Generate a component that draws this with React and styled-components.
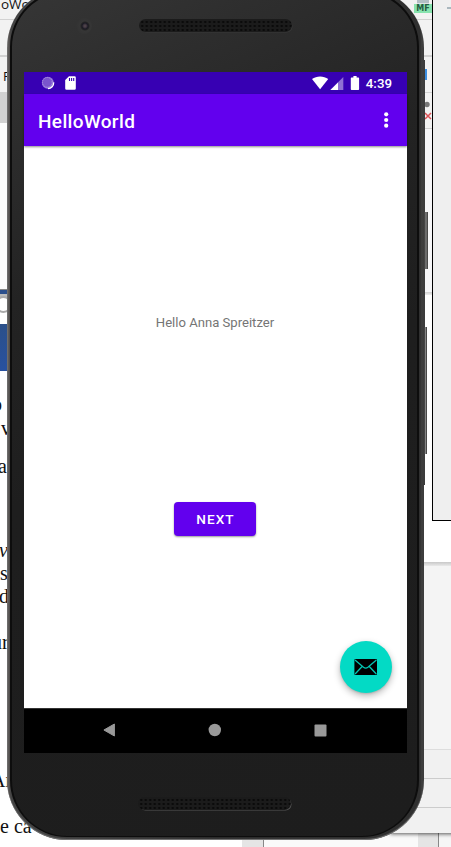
import React from 'react';
import styled, { createGlobalStyle } from 'styled-components';

const Global = createGlobalStyle`
  * { box-sizing: border-box; }
  html, body { margin: 0; overflow: hidden; background: #fff; }
`;

const Desktop = styled.main`
  position: relative;
  width: 451px;
  height: 847px;
  overflow: hidden;
  background: #fff;
  font-family: Roboto, "Liberation Sans", sans-serif;
`;

/* ---- windows behind the emulator ---- */
const BackWindow = styled.section`
  position: absolute;
  left: ${p => p.$x}px;
  top: ${p => p.$y}px;
  width: ${p => p.$w}px;
  height: ${p => p.$h}px;
  display: flex;
  flex-direction: column;
  overflow: hidden;
  background: ${p => p.$bg || '#fff'};
  border: 0 solid ${p => p.$line || '#000'};
  border-width: ${p => p.$edges || '0'};
  box-shadow: ${p => p.$shadow || 'none'};
`;

const Strip = styled.div`
  flex: none;
  display: flex;
  align-items: center;
  justify-content: ${p => p.$justify || 'flex-start'};
  overflow: hidden;
  height: ${p => p.$h}px;
  background: ${p => p.$bg};
  border-bottom: ${p => p.$rule || 0}px solid ${p => p.$line || '#d2d2d2'};
`;

const MenuText = styled.span`
  flex: none;
  margin: ${p => p.$margin};
  font: ${p => p.$size}px/16px "Open Sans", "Noto Sans", sans-serif;
  color: #111;
  white-space: nowrap;
`;

const Ring = styled.span`
  flex: none;
  width: 17px;
  height: 17px;
  margin: 0 0 9px -5px;
  border: 2px solid #aaa;
  border-radius: 50%;
`;

const DocLine = styled.div`
  flex: none;
  height: 22px;
  margin: ${p => p.$gap}px 0 0 ${p => p.$x}px;
  font: ${p => (p.$italic ? 'italic' : 'normal')} 20px/22px "Liberation Serif", serif;
  color: #111;
  white-space: pre;
`;

const Badge = styled.span`
  width: 18px;
  height: 9px;
  margin-top: -1px;
  background: #87e3ae;
  color: #285d43;
  font: bold 8px/9px "DejaVu Sans", sans-serif;
  text-align: center;
`;

const BadgeStack = styled.div`
  display: flex;
  flex-direction: column;
  align-items: center;
  height: 19px;
`;

const BadgeCap = styled.i`
  width: 12px;
  height: 5px;
  background: #b3bfc5;
  border-bottom: 2px solid #dfe3e5;
`;

const Dash = styled.i`
  width: 4px;
  height: 2px;
  margin: 9px 0 0 14px;
  background: #aab7be;
`;

const SplitMark = styled.i`
  width: 3px;
  height: 11px;
  margin-left: 44px;
  background: #3c8ee0;
  border-left: 1px solid #b67b2c;
`;

/* ---- device ---- */
const SideKey = styled.i`
  position: absolute;
  left: 423px;
  top: ${p => p.$y}px;
  width: ${p => p.$w}px;
  height: ${p => p.$h}px;
  background: linear-gradient(90deg, #444 0 50%, ${p => p.$c || '#6c6c6c'} 50% 80%, #484848 80%);
`;

const Shell = styled.section`
  position: absolute;
  left: 7px;
  top: -12px;
  width: 417px;
  height: 852px;
  padding: 2px 5px 3px 3px;
  border-radius: 60px;
  background: linear-gradient(90deg, #737373 0, #55514f 2px, #444 4px, #2b2b2b 50%, #303030 calc(100% - 4px), #414141 calc(100% - 2px), #333 100%);
  box-shadow: inset 0 -1px 1px #777;
`;

const Body = styled.div`
  display: flex;
  flex-direction: column;
  height: 847px;
  padding: 0 11px 0 12px;
  border: 2px solid #0d0d0d;
  border-bottom-width: 1px;
  border-radius: 57px;
  background: linear-gradient(155deg, #363636 0, #2e2e2e 12%, #232323 30%, #1e1e1e 50%, #1d1d1d 100%);
`;

const TopBezel = styled.header`
  height: 80px;
  flex: none;
  display: flex;
  align-items: flex-start;
  padding: 27px 0 0 51px;
`;

const BottomBezel = styled.footer`
  flex: 1;
  padding: 44px 0 0 114px;
`;

const Camera = styled.span`
  width: 16px;
  height: 16px;
  margin: -1px 47px 0 1px;
  border-radius: 50%;
  background: radial-gradient(circle at 9px 8px, #4d4149 0 1px, #1b1a24 3px, #252525 4px, #363636 5px, #343434 7px, #2f2f2f);
`;

const Speaker = styled.div`
  width: 153px;
  height: 13px;
  border-radius: 7px;
  background:
    radial-gradient(circle, #090909 0 .8px, transparent 1.4px) 1px 1px / 4.5px 4px,
    #1b1b1b;
  box-shadow: 1px 1px 0 -0.5px ${p => p.$rim};
`;

const Screen = styled.div`
  flex: none;
  display: flex;
  flex-direction: column;
  width: 383px;
  height: 681px;
  background: #fff;
`;

const StatusBar = styled.div`
  flex: none;
  display: flex;
  align-items: center;
  justify-content: space-between;
  height: 22px;
  padding: 0 15px 0 17px;
  background: #3700b3;
`;

const StatusGroup = styled.div`
  display: flex;
  align-items: center;
  color: #fff;
`;

const Clock = styled.span`
  margin-left: 6px;
  font-size: 13.3px;
  font-weight: 500;
  line-height: 23px;
`;

const AppBar = styled.div`
  flex: none;
  z-index: 1;
  display: flex;
  align-items: center;
  justify-content: space-between;
  height: 52px;
  padding: 0 18px 0 14px;
  background: #6200ee;
  box-shadow: 0 1px 2px rgba(0,0,0,.45);
`;

const Title = styled.h1`
  margin: 2px 0 0;
  font-size: 19px;
  font-weight: 500;
  letter-spacing: .36px;
  color: #fff;
`;

const Content = styled.div`
  flex: 1;
  display: flex;
  flex-direction: column;
  align-items: center;
`;

const Greeting = styled.p`
  margin: 169px 0 0;
  padding-right: 1px;
  font-size: 13.1px;
  line-height: 16px;
  color: #757575;
`;

const NextButton = styled.button`
  width: 82px;
  height: 34px;
  margin: 171px 1px 0 0;
  padding: 1px 0 0 1px;
  border: 0;
  border-radius: 4px;
  background: #6200ee;
  color: #fff;
  font: 500 13.6px/33px Roboto, sans-serif;
  letter-spacing: 1.05px;
  box-shadow: 0 1px 2px rgba(0,0,0,.4);
`;

const Fab = styled.button`
  display: flex;
  align-items: center;
  justify-content: center;
  align-self: flex-end;
  width: 52px;
  height: 52px;
  margin: 105px 15px 0 0;
  padding: 0;
  border: 0;
  border-radius: 50%;
  background: #03dac5;
  box-shadow: 0 3px 7px rgba(0,0,0,.28), 0 1px 2px rgba(0,0,0,.12);
`;

const NavBar = styled.nav`
  flex: none;
  display: flex;
  align-items: center;
  justify-content: space-between;
  height: 45px;
  padding: 0 80px 2px 78px;
  border-top: 1px solid #333;
  background: #000;
`;

export default function App() {
  return (
    <Desktop>
      <Global />
      <BackWindow $x={0} $y={0} $w={45} $h={847}>
        <Strip $h={20} $bg="#f2f2f2" $rule={1}><MenuText $size={13.5} $margin="-11px 0 0 1px">oWo</MenuText></Strip>
        <Strip $h={37} $bg="#f2f2f2" $rule={2} />
        <Strip $h={35} $bg="#f2f2f2"><MenuText $size={13} $margin="3px 0 0 3px">F</MenuText></Strip>
        <Strip $h={31} $bg="#d1d1d1" />
        <Strip $h={167} $bg="#fcfcfc" $rule={1} $line="#888" />
        <Strip $h={4} $bg="#2b4f8c" />
        <Strip $h={30} $bg="linear-gradient(#bbb 0 3px, #fff 4px)"><Ring /></Strip>
        <Strip $h={47} $bg="linear-gradient(#2b5089, #2851a0)" />
        <DocLine $gap={22} $x={-8}>o</DocLine>
        <DocLine $gap={2} $x={1}>v</DocLine>
        <DocLine $gap={16} $x={-2}>at</DocLine>
        <DocLine $gap={62} $x={-1} $italic>v</DocLine>
        <DocLine $gap={1} $x={0}>s</DocLine>
        <DocLine $gap={1} $x={-1}>d</DocLine>
        <DocLine $gap={24} $x={-8}>ur</DocLine>
        <DocLine $gap={116} $x={-9}>Ar</DocLine>
        <DocLine $gap={24} $x={0}>e ca</DocLine>
      </BackWindow>

      <BackWindow $x={242} $y={830} $w={22} $h={17} $bg="#e5e5e5" $edges="0 1px 0 0" $line="#888" />
      <BackWindow $x={264} $y={830} $w={175} $h={17} $bg="linear-gradient(90deg, #fafafa 0 154px, #e5e5e5 154px)" $edges="0 1px 0 0" $line="#888" />
      <BackWindow $x={439} $y={830} $w={12} $h={17} $bg="#f6f6f6" />
      <BackWindow $x={390} $y={562} $w={70} $h={271} $bg="#f4f4f4" $shadow="0 1px 4px rgba(0,0,0,.65)">
        <Strip $h={4} $bg="linear-gradient(#c8c8c8, #e9e9e9)" />
        <Strip $h={184} $bg="#f4f4f4" $rule={1} $line="#ddd" />
        <Strip $h={29} $bg="#f1f1f1" $rule={1} $line="#ccc" />
        <Strip $h={29} $bg="#f1f1f1" $rule={1} $line="#ccc" />
        <Strip $h={25} $bg="#f1f1f1" />
      </BackWindow>
      <BackWindow $x={380} $y={0} $w={71} $h={562} />
      <BackWindow $x={380} $y={0} $w={52} $h={562}>
        <Strip $h={20} $bg="#f2f2f2" $rule={1} $justify="flex-end">
          <BadgeStack><BadgeCap /><Badge>MF</Badge></BadgeStack>
        </Strip>
        <Strip $h={37} $bg="#f2f2f2" $rule={2} />
        <Strip $h={36} $bg="#f2f2f2" $rule={1}><SplitMark /></Strip>
        <Strip $h={36} $bg="#f2f2f2" $rule={1} $justify="flex-end">
          <svg width="8" height="22" viewBox="0 0 8 22">
            <circle cx="3" cy="4.5" r="2.7" fill="#777" />
            <path d="M1 13l6 6M7 13l-6 6" stroke="#dc5257" strokeWidth="1.5" />
          </svg>
        </Strip>
        <Strip $h={163} $bg="#f6f6f8" />
        <Strip $h={3} $bg="linear-gradient(#d0d0d0, #eee)" />
      </BackWindow>
      <BackWindow $x={432} $y={-2} $w={30} $h={523} $bg="#efefef" $edges="0 0 1px 1px"><Dash /></BackWindow>

      <SideKey $y={60} $w={2} $h={425} $c="#3c3c3c" />
      <SideKey $y={212} $w={5} $h={57} />
      <SideKey $y={327} $w={4} $h={127} $c="#858585" />

      <Shell>
        <Body>
          <TopBezel><Camera /><Speaker $rim="#393939" /></TopBezel>
          <Screen>
            <StatusBar>
              <StatusGroup>
                <svg width="38" height="16" viewBox="0 0 38 16">
                  <circle cx="6.8" cy="7.8" r="6" fill="#9478d8" />
                  <circle cx="6.3" cy="7.3" r="4.8" fill="#7a55cd" stroke="#b39be3" strokeWidth=".8" strokeDasharray="1 1" />
                  <path d="M12.7 7.4A6 6 0 0 1 7 13.7" fill="none" stroke="#fff" strokeWidth="1.3" />
                  <path fill="#fff" d="M28 1.2h5.5a1.3 1.3 0 0 1 1.3 1.3v11a1.3 1.3 0 0 1-1.3 1.3h-8a1.3 1.3 0 0 1-1.3-1.3V5z" />
                  <path stroke="#3700b3" strokeWidth="1.1" d="M28.5 3v3M30.6 3v3M32.7 3v3" />
                </svg>
              </StatusGroup>
              <StatusGroup>
                <svg width="48" height="16" viewBox="0 0 48 16">
                  <path fill="#fff" d="M0 4.1C4.5 .6 11.8.6 16.2 4.1L8.1 14.2z" />
                  <path fill="#8f70d3" d="M31.3 2v13H18.4z" />
                  <path fill="#fff" d="M26 7.4V15h-7.6z" />
                  <path fill="#fff" d="M39.6 2.4h1.8V1h3.2v1.4h1.8q.7 0 .7.8v11q0 .8-.8.8h-6.7q-.8 0-.8-.8v-11q0-.8.8-.8z" />
                </svg>
                <Clock>4:39</Clock>
              </StatusGroup>
            </StatusBar>
            <AppBar>
              <Title>HelloWorld</Title>
              <svg width="5" height="18" viewBox="0 0 5 18" fill="#fff">
                <circle cx="2.2" cy="3.3" r="2.1" /><circle cx="2.2" cy="9" r="2.1" /><circle cx="2.2" cy="14.7" r="2.1" />
              </svg>
            </AppBar>
            <Content>
              <Greeting>Hello Anna Spreitzer</Greeting>
              <NextButton>NEXT</NextButton>
              <Fab aria-label="Mail">
                <svg width="24" height="18" viewBox="0 0 24 18">
                  <rect x=".4" y="1" width="22.6" height="16" rx="1" fill="#000" />
                  <path d="M1 2l8.5 7.3q2.2 1.7 4.4 0L22.4 2M1.1 16l7-7.5M22.3 16l-7-7.5" fill="none" stroke="#03c5b2" strokeWidth="1.3" />
                </svg>
              </Fab>
            </Content>
            <NavBar>
              <svg width="14" height="16" viewBox="0 0 14 16"><path d="M1.9 8L12.4 2v12z" fill="#999" stroke="#999" strokeLinejoin="round" /></svg>
              <svg width="14" height="14" viewBox="0 0 14 14"><circle cx="6.8" cy="7" r="6.2" fill="#999" /></svg>
              <svg width="13" height="13" viewBox="0 0 13 13"><rect x=".5" y=".5" width="12" height="12" rx="1" fill="#999" /></svg>
            </NavBar>
          </Screen>
          <BottomBezel><Speaker $rim="#555" /></BottomBezel>
        </Body>
      </Shell>
    </Desktop>
  );
}
